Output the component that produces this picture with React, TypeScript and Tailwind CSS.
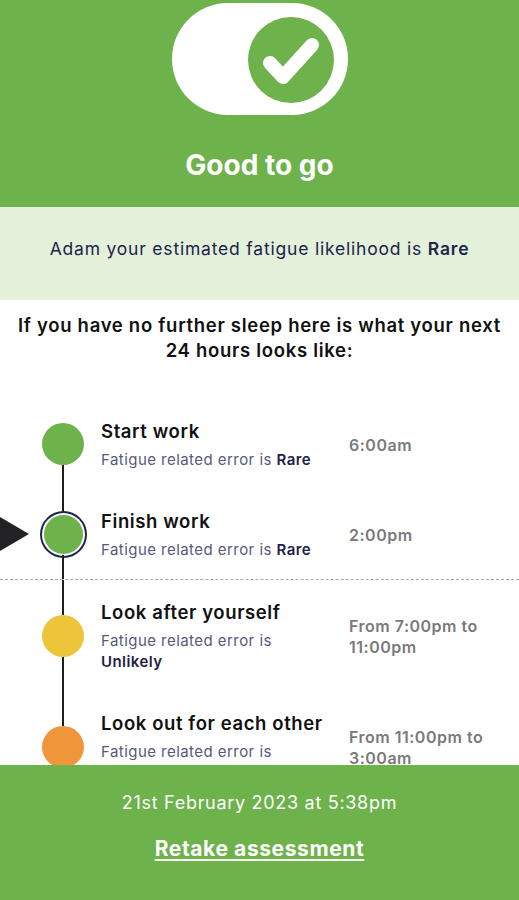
import React from 'react';

type Step = {
  title: string;
  level: string;
  time: string[];
  color: string;
  current?: boolean;
  wrap?: boolean;
};

const steps: Step[] = [
  { title: 'Start work', level: 'Rare', time: ['6:00am'], color: 'bg-[#6db24b]' },
  { title: 'Finish work', level: 'Rare', time: ['2:00pm'], color: 'bg-[#6db24b]', current: true },
  { title: 'Look after yourself', level: 'Unlikely', time: ['From 7:00pm to', '11:00pm'], color: 'bg-[#ecc53b]', wrap: true },
  { title: 'Look out for each other', level: 'Possible', time: ['From 11:00pm to', '3:00am'], color: 'bg-[#f0963a]', wrap: true },
];

function Toggle() {
  return (
    <svg width="176" height="112" viewBox="0 0 176 112">
      <rect x="0" y="0" width="176" height="112" rx="56" fill="#ffffff" />
      <circle cx="119" cy="57" r="43" fill="#6db24b" />
      <path d="M98 60 L111 74 L140 42" fill="none" stroke="#ffffff" strokeWidth="14" strokeLinecap="round" strokeLinejoin="round" />
    </svg>
  );
}

function Row({ step, first, divider }: { step: Step; first: boolean; divider: boolean }) {
  return (
    <div className={`flex ${divider ? 'border-t border-dashed border-[#a9a9a9]' : ''}`}>
      <div className="flex w-[42px] items-center">
        {step.current && (
          <svg width="29" height="34" viewBox="0 0 29 34">
            <path d="M0 0 L29 17 L0 34 Z" fill="#222226" />
          </svg>
        )}
      </div>
      <div className="flex w-[42px] flex-col items-center">
        <div className={`w-[2px] flex-1 ${first ? '' : 'bg-[#1e1e1e]'}`} />
        <div className="flex h-[42px] w-[42px] items-center justify-center">
          {step.current ? (
            <div className={`h-[39px] w-[39px] rounded-full ${step.color} shadow-[0_0_0_2px_#ffffff,0_0_0_4px_#20234a]`} />
          ) : (
            <div className={`h-[42px] w-[42px] rounded-full ${step.color}`} />
          )}
        </div>
        <div className="w-[2px] flex-1 bg-[#1e1e1e]" />
      </div>
      <div className="flex w-[265px] flex-col pt-[20px] pb-[19px] pl-[17px]">
        <div className="text-[18.5px] font-semibold leading-[24px] tracking-[0.6px] text-[#111]">{step.title}</div>
        <div className="mt-[6px] text-[15px] leading-[21px] tracking-[0.45px] text-[#565a7a]">
          Fatigue related error is{step.wrap ? <br /> : ' '}
          <span className="font-semibold text-[#1f2147]">{step.level}</span>
        </div>
      </div>
      <div className="flex flex-col justify-center pt-[2px] text-[16px] font-semibold leading-[21px] tracking-[0.5px] text-[#7a7a7a]">
        {step.time.map((t) => (
          <div key={t}>{t}</div>
        ))}
      </div>
    </div>
  );
}

export default function App() {
  return (
    <div className="flex h-[900px] flex-col overflow-hidden bg-white font-['Inter',sans-serif]">
      <div className="flex-1 overflow-hidden">
        <div className="flex h-[207px] flex-col items-center bg-[#6db24b] pt-[3px]">
          <Toggle />
          <h1 className="mt-[33px] text-[28px] font-bold leading-[34px] text-white">Good to go</h1>
        </div>

        <div className="flex h-[93px] items-center justify-center bg-[#e3f0da] pb-[8px] text-[17.5px] tracking-[0.8px] text-[#20234a]">
          Adam your estimated fatigue likelihood is&nbsp;<span className="font-semibold">Rare</span>
        </div>

        <p className="px-[10px] pt-[13px] text-center text-[18.5px] font-semibold leading-[25px] tracking-[0.7px] text-[#111]">
          If you have no further sleep here is what your next
          <br />
          24 hours looks like:
        </p>

        <div className="mt-[36px]">
          {steps.map((s, i) => (
            <Row key={s.title} step={s} first={i === 0} divider={i === 2} />
          ))}
        </div>
      </div>

      <div className="flex h-[135px] shrink-0 flex-col items-center bg-[#6db24b] pt-[26px] text-white">
        <div className="text-[18px] leading-[24px] tracking-[0.7px]">21st February 2023 at 5:38pm</div>
        <a href="#" className="mt-[22px] text-[21px] font-bold leading-[24px] tracking-[0.6px] underline underline-offset-[3px]">
          Retake assessment
        </a>
      </div>
    </div>
  );
}
